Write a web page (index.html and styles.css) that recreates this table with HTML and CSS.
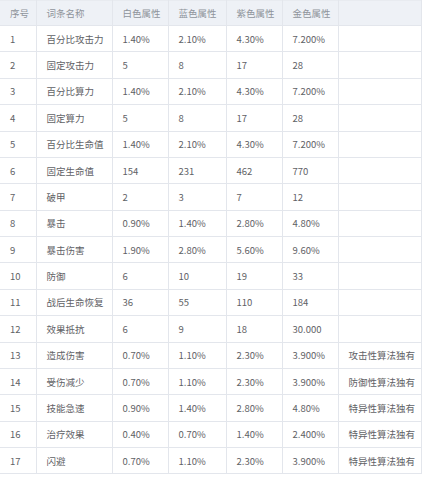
FILE: index.html
```html
<!DOCTYPE html>
<html lang="zh">
<head>
<meta charset="utf-8">
<link rel="stylesheet" href="styles.css">
</head>
<body>
<table class="attr-table">
  <colgroup>
    <col class="c-no"><col class="c-name"><col class="c-val"><col class="c-val2"><col class="c-val"><col class="c-val"><col class="c-note">
  </colgroup>
  <thead>
    <tr><th>序号</th><th>词条名称</th><th>白色属性</th><th>蓝色属性</th><th>紫色属性</th><th>金色属性</th><th></th></tr>
  </thead>
  <tbody>
    <tr><td>1</td><td>百分比攻击力</td><td>1.40%</td><td>2.10%</td><td>4.30%</td><td>7.200%</td><td></td></tr>
    <tr><td>2</td><td>固定攻击力</td><td>5</td><td>8</td><td>17</td><td>28</td><td></td></tr>
    <tr><td>3</td><td>百分比算力</td><td>1.40%</td><td>2.10%</td><td>4.30%</td><td>7.200%</td><td></td></tr>
    <tr><td>4</td><td>固定算力</td><td>5</td><td>8</td><td>17</td><td>28</td><td></td></tr>
    <tr><td>5</td><td>百分比生命值</td><td>1.40%</td><td>2.10%</td><td>4.30%</td><td>7.200%</td><td></td></tr>
    <tr><td>6</td><td>固定生命值</td><td>154</td><td>231</td><td>462</td><td>770</td><td></td></tr>
    <tr><td>7</td><td>破甲</td><td>2</td><td>3</td><td>7</td><td>12</td><td></td></tr>
    <tr><td>8</td><td>暴击</td><td>0.90%</td><td>1.40%</td><td>2.80%</td><td>4.80%</td><td></td></tr>
    <tr><td>9</td><td>暴击伤害</td><td>1.90%</td><td>2.80%</td><td>5.60%</td><td>9.60%</td><td></td></tr>
    <tr><td>10</td><td>防御</td><td>6</td><td>10</td><td>19</td><td>33</td><td></td></tr>
    <tr><td>11</td><td>战后生命恢复</td><td>36</td><td>55</td><td>110</td><td>184</td><td></td></tr>
    <tr><td>12</td><td>效果抵抗</td><td>6</td><td>9</td><td>18</td><td>30.000</td><td></td></tr>
    <tr><td>13</td><td>造成伤害</td><td>0.70%</td><td>1.10%</td><td>2.30%</td><td>3.900%</td><td>攻击性算法独有</td></tr>
    <tr><td>14</td><td>受伤减少</td><td>0.70%</td><td>1.10%</td><td>2.30%</td><td>3.900%</td><td>防御性算法独有</td></tr>
    <tr><td>15</td><td>技能急速</td><td>0.90%</td><td>1.40%</td><td>2.80%</td><td>4.80%</td><td>特异性算法独有</td></tr>
    <tr><td>16</td><td>治疗效果</td><td>0.40%</td><td>0.70%</td><td>1.40%</td><td>2.400%</td><td>特异性算法独有</td></tr>
    <tr><td>17</td><td>闪避</td><td>0.70%</td><td>1.10%</td><td>2.30%</td><td>3.900%</td><td>特异性算法独有</td></tr>
  </tbody>
</table>
</body>
</html>
```
FILE: styles.css
```css
html, body {
  margin: 0;
  padding: 0;
  background: #ffffff;
}

.attr-table {
  width: 421px;
  table-layout: fixed;
  border-collapse: collapse;
  font-family: "Noto Sans CJK SC", "Microsoft YaHei", sans-serif;
  font-size: 9.5px;
  color: #5f6266;
}

.c-no { width: 36px; }
.c-name { width: 76px; }
.c-val { width: 56px; }
.c-val2 { width: 58px; }
.c-note { width: 83px; }

.attr-table th,
.attr-table td {
  border: 1px solid #e3e6ec;
  padding: 0 0 0 10px;
  text-align: left;
  white-space: nowrap;
  overflow: hidden;
  vertical-align: middle;
}

.attr-table th:first-child,
.attr-table td:first-child {
  border-left: none;
}

.attr-table thead tr {
  height: 25px;
}

.attr-table th {
  background: #eef1f6;
  color: #8f949b;
  font-weight: normal;
  border-top: 1px solid #e8ebf0;
}

.attr-table tbody tr {
  height: 26.375px;
}
```
